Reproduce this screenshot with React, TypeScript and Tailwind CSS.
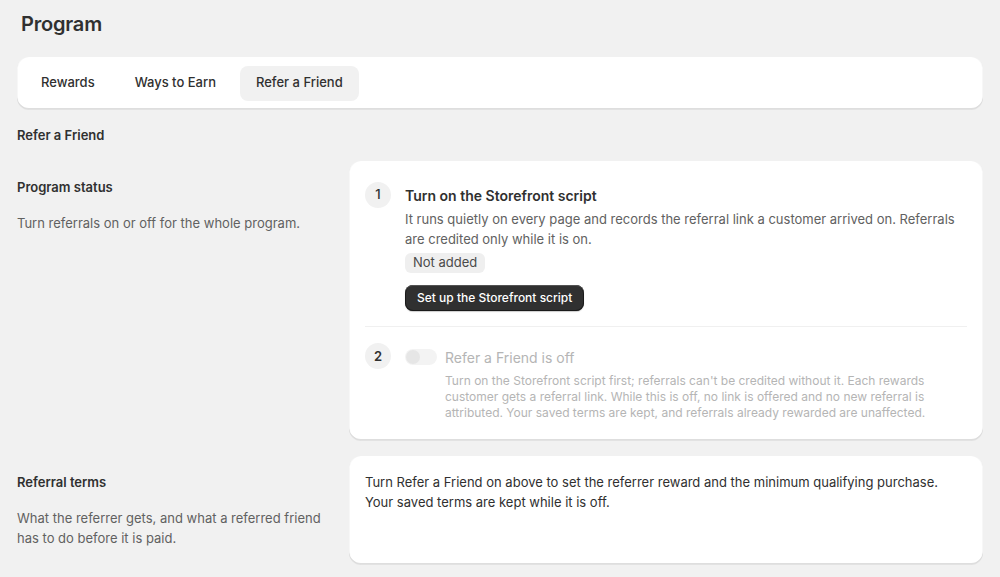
import React from "react";

const card =
  "bg-white rounded-xl shadow-[0_1px_0_0_rgba(26,26,26,0.07),inset_0_-1px_0_0_rgba(0,0,0,0.13),inset_1px_0_0_0_rgba(0,0,0,0.03),inset_-1px_0_0_0_rgba(0,0,0,0.03)]";

export default function App() {
  return (
    <div
      className="min-h-[577px] bg-[#f1f1f1] text-[#303030] px-[17px]"
      style={{ fontFamily: "Inter, 'Noto Sans', sans-serif" }}
    >
      <div className="pt-[12px] pl-[4px] text-[20px] leading-[24px] font-semibold tracking-[-0.2px]">
        Program
      </div>

      <div className={`${card} mt-[21px] p-2 flex gap-2 h-[52px] items-center`}>
        <div className="px-4 h-[35px] flex items-center text-[13px] font-medium rounded-lg">
          Rewards
        </div>
        <div className="px-4 h-[35px] flex items-center text-[13px] font-medium rounded-lg">
          Ways to Earn
        </div>
        <div className="px-4 h-[35px] flex items-center text-[13px] font-medium rounded-lg bg-[#f1f1f1]">
          Refer a Friend
        </div>
      </div>

      <div className="mt-4 text-[13px] leading-[20px] font-semibold">Refer a Friend</div>

      <div className="mt-4 grid grid-cols-[316px_1fr] gap-4">
        <div className="py-4">
          <div className="text-[13px] leading-[20px] font-semibold">Program status</div>
          <div className="mt-4 text-[13px] leading-[20px] text-[#616161]">
            Turn referrals on or off for the whole program.
          </div>
        </div>
        <div className={`${card} p-4`}>
          <div className="pt-[5px] pb-[15px] flex gap-[14px]">
            <div className="w-[26px] h-[26px] shrink-0 rounded-full bg-[#f1f1f1] flex items-center justify-center text-[13px] font-medium">
              1
            </div>
            <div className="flex-1">
              <div className="h-[26px] flex items-center text-[14px] font-semibold">
                Turn on the Storefront script
              </div>
              <div className="mt-px text-[13px] leading-[20px] text-[#616161]">
                It runs quietly on every page and records the referral link a customer arrived on. Referrals are credited only while it is on.
              </div>
              <div className="mt-1 inline-flex h-[20px] items-center px-2 rounded-md bg-[#efefef] text-[13px] text-[#4a4a4a]">
                Not added
              </div>
              <div>
                <button className="mt-3 h-[26px] px-3 rounded-lg bg-[#303030] text-white text-[12px] font-medium shadow-[inset_0_1px_0_0_rgba(255,255,255,0.25),inset_0_0_0_1px_#1a1a1a,0_1px_1px_rgba(0,0,0,0.2)]">
                  Set up the Storefront script
                </button>
              </div>
            </div>
          </div>
          <div className="h-px bg-[#f0f0f0]" />
          <div className="pt-4 pb-[3px] flex gap-[14px]">
            <div className="w-[26px] h-[26px] shrink-0 rounded-full bg-[#f1f1f1] flex items-center justify-center text-[13px] font-semibold">
              2
            </div>
            <div className="flex-1">
              <div className="h-[26px] flex items-center gap-2">
                <div className="w-[32px] h-[16px] rounded-full bg-[#f3f3f3] relative mt-[2px]">
                  <div className="absolute left-[1px] top-[1px] w-[14px] h-[14px] rounded-full bg-[#e6e6e6]" />
                </div>
                <div className="text-[14px] text-[#b5b5b5] mt-[3px]">Refer a Friend is off</div>
              </div>
              <div className="mt-1 ml-[40px] text-[12px] leading-[16px] text-[#b5b5b5]">
                Turn on the Storefront script first; referrals can&apos;t be credited without it. Each rewards customer gets a referral link. While this is off, no link is offered and no new referral is attributed. Your saved terms are kept, and referrals already rewarded are unaffected.
              </div>
            </div>
          </div>
        </div>
      </div>

      <div className="mt-4 grid grid-cols-[316px_1fr] gap-4">
        <div className="py-4">
          <div className="text-[13px] leading-[20px] font-semibold">Referral terms</div>
          <div className="mt-4 text-[13px] leading-[20px] text-[#616161]">
            What the referrer gets, and what a referred friend has to do before it is paid.
          </div>
        </div>
        <div className={`${card} p-4`}>
          <div className="text-[13px] leading-[20px]">
            Turn Refer a Friend on above to set the referrer reward and the minimum qualifying purchase. Your saved terms are kept while it is off.
          </div>
        </div>
      </div>
    </div>
  );
}
